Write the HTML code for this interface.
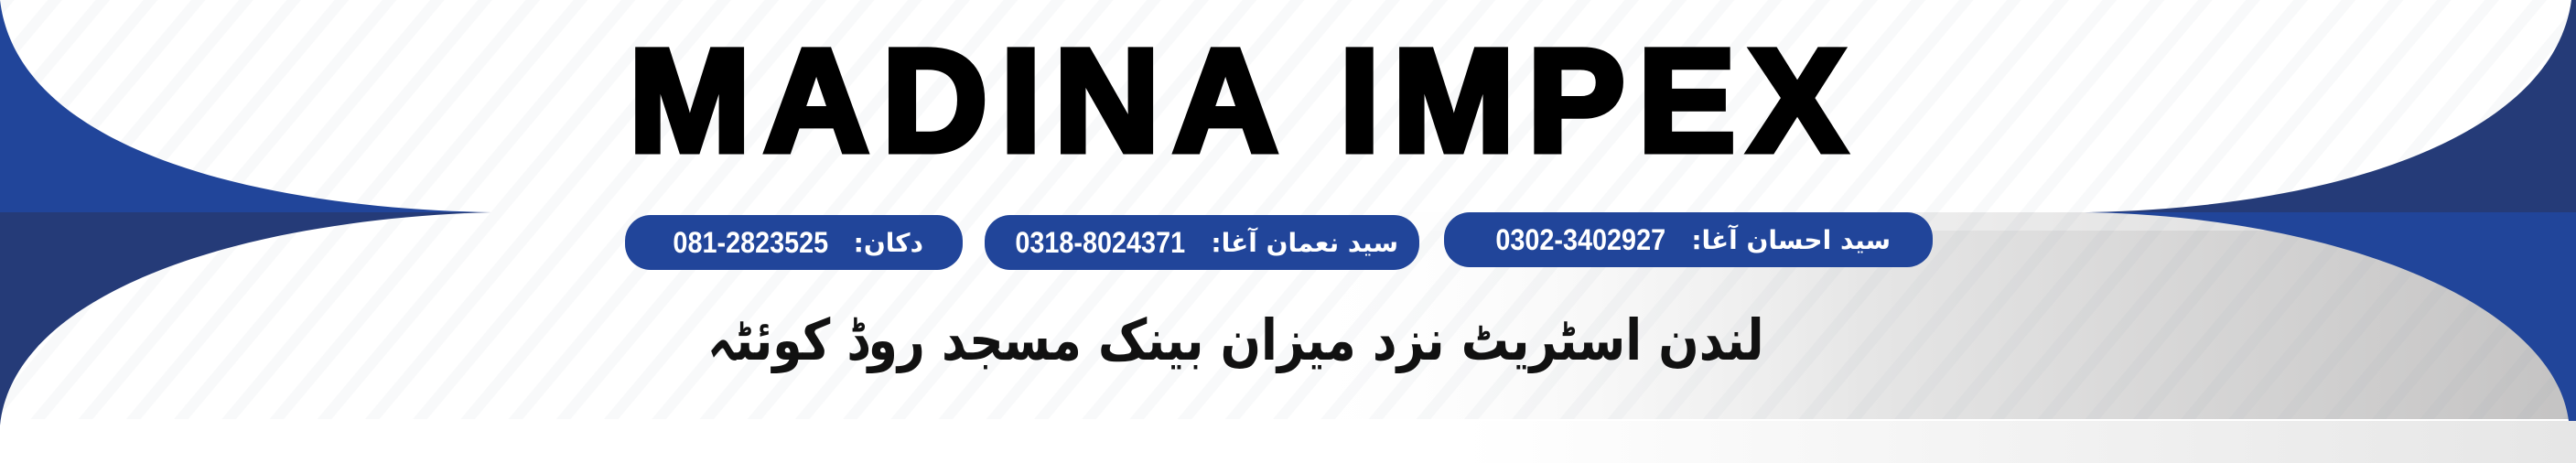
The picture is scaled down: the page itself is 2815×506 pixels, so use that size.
<!DOCTYPE html>
<html><head><meta charset="utf-8"><style>
html,body{margin:0;padding:0}
body{width:2815px;height:506px;position:relative;overflow:hidden;background:#fff;font-family:"Liberation Sans",sans-serif}
.abs{position:absolute}
.title{left:687px;top:30px;font-weight:bold;font-size:160px;letter-spacing:14px;line-height:1;color:#000;white-space:nowrap;-webkit-text-stroke:7px #000}
.pill{background:#21459a;border-radius:28px;height:60px;color:#fff;display:flex;align-items:center;justify-content:center;gap:18px;font-weight:bold;white-space:nowrap}
.num{font-family:"Liberation Sans Narrow","Liberation Sans",sans-serif;font-size:32px;display:inline-block;transform:scaleX(0.9)}
.ur{font-family:"DejaVu Sans",sans-serif;font-size:28px;direction:rtl}
.addr{left:895px;top:335px;width:1143px;text-align:center;font-family:"DejaVu Sans",sans-serif;font-weight:bold;font-size:62px;direction:rtl;color:#111;white-space:nowrap}
.addr span{display:inline-block;transform:scaleX(0.84);transform-origin:center}
</style></head><body>
<svg class="abs" style="left:0;top:0" width="2815" height="506">
<defs>
<linearGradient id="g1" x1="0" x2="1" y1="0" y2="0">
<stop offset="0" stop-color="#fff" stop-opacity="0"/>
<stop offset="0.45" stop-color="#e6e6e6"/>
<stop offset="1" stop-color="#c4c3c3"/>
</linearGradient>
<linearGradient id="g2" x1="0" x2="1"><stop offset="0" stop-color="#fff"/><stop offset="1" stop-color="#e6e6e6"/></linearGradient>
<pattern id="st" width="40" height="40" patternUnits="userSpaceOnUse" patternTransform="rotate(40)">
<rect x="0" y="0" width="12" height="40" fill="#8a96a8" opacity="0.06"/>
</pattern>
</defs>
<rect x="1400" y="232" width="1415" height="226" fill="url(#g1)"/>
<rect x="1400" y="232" width="1415" height="20" fill="#fff" opacity="0.35"/>
<rect x="0" y="0" width="2815" height="458" fill="url(#st)"/>
<rect x="1600" y="460" width="1215" height="46" fill="url(#g2)"/>
<path d="M0,0 C20,170 300,228 537,232 L0,232 Z" fill="#21459a"/>
<path d="M0,232 L537,232 C260,240 15,320 0,465 Z" fill="#253b78"/>
<path d="M2815,0 L2810,0 C2790,150 2550,228 2278,232 L2815,232 Z" fill="#253b78"/>
<path d="M2278,232 C2550,236 2790,330 2807,460 L2815,460 L2815,232 Z" fill="#21459a"/>
</svg>
<div class="abs title">MADINA IMPEX</div>
<div class="abs pill" style="left:683px;top:235px;width:369px"><span class="num">081-2823525</span><span class="ur">دکان:</span></div>
<div class="abs pill" style="left:1076px;top:235px;width:475px"><span class="num">0318-8024371</span><span class="ur">سید نعمان آغا:</span></div>
<div class="abs pill" style="left:1578px;top:232px;width:534px"><span class="num">0302-3402927</span><span class="ur">سید احسان آغا:</span></div>
<div class="abs addr"><span>لندن اسٹریٹ نزد میزان بینک مسجد روڈ کوئٹہ</span></div>
</body></html>
